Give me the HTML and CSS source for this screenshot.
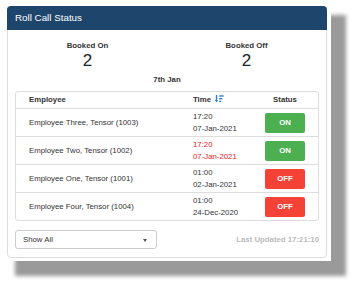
FILE: index.html
```html
<!DOCTYPE html>
<html lang="en">
<head>
    <meta charset="UTF-8">
    <meta name="viewport" content="width=device-width, initial-scale=1.0">
    <title>Roll Call Status</title>
    <link rel="stylesheet" href="styles.css">
</head>
<body>
    <div class="frame">
        <div class="panel">
            <div class="panel-heading">Roll Call Status</div>
            <div class="panel-body">
                <div class="stats">
                    <div class="stat">
                        <div class="stat-label">Booked On</div>
                        <div class="stat-value">2</div>
                    </div>
                    <div class="stat">
                        <div class="stat-label">Booked Off</div>
                        <div class="stat-value">2</div>
                    </div>
                </div>
                <div class="day">7th Jan</div>

                <table class="roll">
                    <thead>
                        <tr>
                            <th class="col-name">Employee</th>
                            <th class="col-time">Time
                                <svg class="sort-icon" width="9" height="8" viewBox="0 0 9 8">
                                    <path d="M1.5 0 V6" stroke="#2f7fd0" stroke-width="1.4"/>
                                    <path d="M0 5 L1.5 7.6 L3 5 Z" fill="#2f7fd0"/>
                                    <rect x="4.2" y="0.3" width="4.5" height="1.4" fill="#2f7fd0"/>
                                    <rect x="4.2" y="3" width="3.2" height="1.4" fill="#2f7fd0"/>
                                    <rect x="4.2" y="5.7" width="2" height="1.4" fill="#2f7fd0"/>
                                </svg>
                            </th>
                            <th class="col-status">Status</th>
                        </tr>
                    </thead>
                    <tbody>
                        <tr>
                            <td class="col-name">Employee Three, Tensor (1003)</td>
                            <td class="col-time">17:20<br>07-Jan-2021</td>
                            <td class="col-status"><span class="badge on">ON</span></td>
                        </tr>
                        <tr>
                            <td class="col-name">Employee Two, Tensor (1002)</td>
                            <td class="col-time late">17:20<br>07-Jan-2021</td>
                            <td class="col-status"><span class="badge on">ON</span></td>
                        </tr>
                        <tr>
                            <td class="col-name">Employee One, Tensor (1001)</td>
                            <td class="col-time">01:00<br>02-Jan-2021</td>
                            <td class="col-status"><span class="badge off">OFF</span></td>
                        </tr>
                        <tr>
                            <td class="col-name">Employee Four, Tensor (1004)</td>
                            <td class="col-time">01:00<br>24-Dec-2020</td>
                            <td class="col-status"><span class="badge off">OFF</span></td>
                        </tr>
                    </tbody>
                </table>

                <div class="footer">
                    <div class="filter">Show All <span class="caret"></span></div>
                    <div class="updated">Last Updated 17:21:10</div>
                </div>
            </div>
        </div>
    </div>
</body>
</html>
```

FILE: styles.css
```css
html, body {
    height: 100%;
}
body {
    margin: 0;
    background-color: #fff;
    font-family: "Liberation Sans", Arial, sans-serif;
    color: #333;
}
.frame {
    display: inline-block;
    vertical-align: top;
    width: 331px;
    padding: 6px 0 3px 7px;
    box-sizing: border-box;
    background-color: #fff;
    box-shadow: 15px 15px 4px #9a9a9a;
}
.panel {
    width: 320px;
    border: 1px solid #ddd;
    border-radius: 4px;
    box-sizing: border-box;
    background-color: #fff;
}
.panel-heading {
    margin: -1px -1px 0;
    height: 24px;
    padding-left: 8px;
    background-color: #1e466c;
    border-radius: 4px 4px 0 0;
    color: #fff;
    font-size: 9.8px;
    line-height: 24px;
}
.panel-body {
    padding: 10px 7px 8px;
}
.stats {
    display: grid;
    grid-template-columns: 1fr 1fr;
    margin: 0 -7px;
    text-align: center;
}
.stat-label {
    font-size: 7.8px;
    font-weight: bold;
    line-height: 11px;
}
.stat-value {
    font-size: 17px;
    line-height: 20px;
    color: #222;
}
.day {
    margin-top: 3px;
    text-align: center;
    font-size: 7.8px;
    font-weight: bold;
    line-height: 11px;
}
.roll {
    width: 100%;
    margin-top: 6px;
    border: 1px solid #ddd;
    border-radius: 3px;
    border-collapse: separate;
    border-spacing: 0;
    font-size: 7.8px;
    line-height: 11.5px;
}
.roll th {
    height: 16px;
    padding: 0;
    font-weight: bold;
    text-align: left;
}
.roll td {
    height: 27px;
    padding: 0;
    border-top: 1px solid #ddd;
    vertical-align: middle;
}
.roll .col-name {
    padding-left: 13px;
}
.roll .col-time {
    width: 59px;
    padding-left: 7px;
}
.roll .col-status {
    width: 66px;
    text-align: center;
}
.sort-icon {
    vertical-align: -1px;
    margin-left: 2px;
}
.late {
    color: #f0201c;
}
.badge {
    display: inline-block;
    width: 40px;
    height: 20px;
    line-height: 20px;
    border-radius: 2px;
    color: #fff;
    font-weight: bold;
    vertical-align: middle;
}
.badge.on {
    background-color: #4caf50;
}
.badge.off {
    background-color: #f44336;
}
.footer {
    display: flex;
    justify-content: space-between;
    align-items: center;
    margin-top: 9px;
}
.filter {
    position: relative;
    width: 142px;
    height: 19px;
    padding-left: 7px;
    border: 1px solid #ccc;
    border-radius: 3px;
    box-sizing: border-box;
    font-size: 7.8px;
    line-height: 17px;
}
.caret {
    position: absolute;
    right: 9px;
    top: 8px;
    border-left: 2.5px solid transparent;
    border-right: 2.5px solid transparent;
    border-top: 3px solid #555;
}
.updated {
    font-size: 7.8px;
    font-weight: bold;
    color: #bbb;
}
```
